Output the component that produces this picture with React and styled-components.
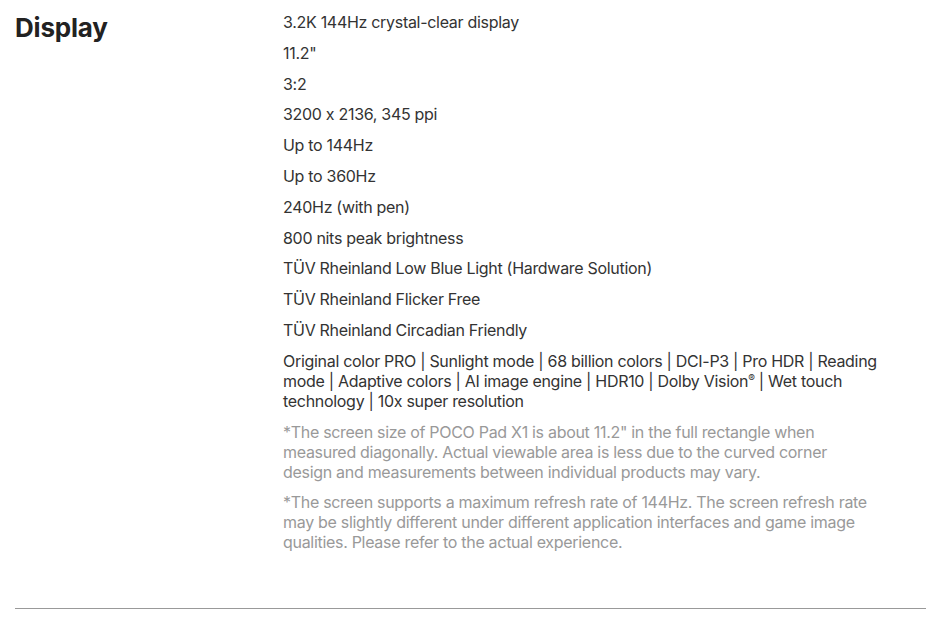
import React from "react";
import styled, { createGlobalStyle } from "styled-components";

const GlobalStyle = createGlobalStyle`
    body {
        margin: 0;
        background: #fff;
        font-family: "Inter", "Noto Sans", sans-serif;
        font-feature-settings: "calt" 0;
        color: #333;
    }
`;

const Section = styled.section`
    display: grid;
    grid-template-columns: 268px 595.5px;
    margin: 0 24px 0 15px;
    padding: 12px 0 56px;
    border-bottom: 1px solid #999;
`;

const Title = styled.h2`
    margin: 0;
    font-size: 26px;
    font-weight: 700;
    line-height: 32px;
    letter-spacing: -0.2px;
    color: #222;
`;

const SpecList = styled.ul`
    list-style: none;
    margin: 0;
    padding: 0;
    display: flex;
    flex-direction: column;
    gap: 10.8px;
`;

const Spec = styled.li`
    font-size: 16px;
    line-height: 20px;
    letter-spacing: -0.3px;
    color: ${(props) => (props.note ? "#999" : "#333")};
`;

const Reg = styled.span`
    display: inline-block;
    font-size: 10px;
    line-height: 12px;
    vertical-align: top;
    margin-top: 1px;
`;

const specs = [
    "3.2K 144Hz crystal-clear display",
    "11.2\"",
    "3:2",
    "3200 x 2136, 345 ppi",
    "Up to 144Hz",
    "Up to 360Hz",
    "240Hz (with pen)",
    "800 nits peak brightness",
    "TÜV Rheinland Low Blue Light (Hardware Solution)",
    "TÜV Rheinland Flicker Free",
    "TÜV Rheinland Circadian Friendly",
    "Original color PRO | Sunlight mode | 68 billion colors | DCI-P3 | Pro HDR | Reading mode | Adaptive colors | AI image engine | HDR10 | Dolby Vision® | Wet touch technology | 10x super resolution",
];

const notes = [
    "*The screen size of POCO Pad X1 is about 11.2\" in the full rectangle when measured diagonally. Actual viewable area is less due to the curved corner design and measurements between individual products may vary.",
    "*The screen supports a maximum refresh rate of 144Hz. The screen refresh rate may be slightly different under different application interfaces and game image qualities. Please refer to the actual experience.",
];

// ® shows as a small raised mark
function withReg(text) {
    const parts = text.split("®");
    return parts.map((p, i) => (
        <React.Fragment key={i}>
            {p}
            {i < parts.length - 1 && <Reg>®</Reg>}
        </React.Fragment>
    ));
}

export default function App() {
    return (
        <>
            <GlobalStyle />
            <Section>
                <Title>Display</Title>
                <SpecList>
                    {specs.map((s) => (
                        <Spec key={s}>{withReg(s)}</Spec>
                    ))}
                    {notes.map((n) => (
                        <Spec key={n} note>{n}</Spec>
                    ))}
                </SpecList>
            </Section>
        </>
    );
}
